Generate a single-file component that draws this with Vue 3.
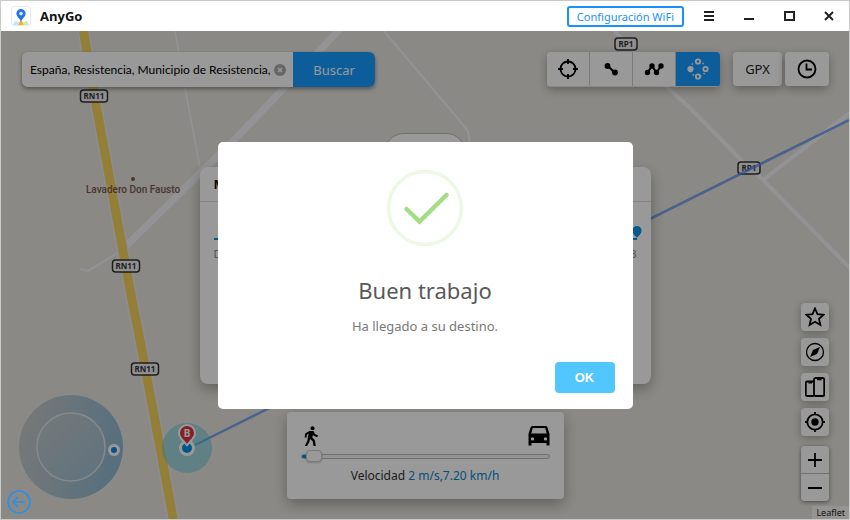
<template>
  <div class="window">
    <header class="title-bar">
      <svg class="app-icon" viewBox="0 0 20 20" aria-hidden="true">
        <rect x="0.5" y="0.5" width="19" height="19" rx="3" fill="#fff" stroke="#e9e9ee" />
        <path d="M2 19l2-4 4 1-1 3z" fill="#bfe9f5" />
        <path d="M7 19l2-4h2l2 4z" fill="#fbb02d" />
        <path d="M13 19l-1-3 4-1 2 4z" fill="#c9efad" />
        <path d="M10 3a4.6 4.6 0 0 0-4.6 4.6C5.400 11 9 12.500 10 16c1-3.500 4.600-5 4.600-8.400A4.600 4.600 0 0 0 10 3z" fill="#2475ec" />
        <circle cx="10" cy="7.600" r="1.800" fill="#cfe6ff" />
      </svg>
      <h1 class="app-name">AnyGo</h1>
      <button class="wifi-btn" type="button">Configuración WiFi</button>
      <button
        v-for="control in controls"
        :key="control.label"
        class="control-btn"
        type="button"
        :aria-label="control.label"
      >
        <svg viewBox="0 0 12 12" aria-hidden="true"><path :d="control.path" /></svg>
      </button>
    </header>

    <main class="stage">
      <svg class="map" viewBox="1 31 848 488" preserveAspectRatio="xMidYMid slice" aria-hidden="true">
        <g class="road">
          <path d="M175 31L189 110L200 167" stroke-width="1.500" />
          <path d="M384 31L400 50L459 120L468 131L470 145" stroke-width="2" />
          <path d="M127 247L88 271L80 269" stroke-width="2" />
          <path d="M341 28L263 110L240 134L124 248" stroke-width="7" />
          <path d="M612 28L667 87L692 110L742 161L763 180L851 269" stroke-width="4" />
          <path d="M763 180L851 112" stroke-width="4" />
        </g>
        <path d="M83 28L97 110L132 300L140 340L174 523" fill="none" stroke="#ebebf2" stroke-width="12" />
        <path d="M83 28L97 110L132 300L140 340L174 523" fill="none" stroke="#f6d45c" stroke-width="9" />
        <g v-for="shield in shields" :key="shield.x" class="shield">
          <rect :x="shield.x - shield.w / 2" :y="shield.y - 6" :width="shield.w" height="12" rx="3" />
          <text :x="shield.x" :y="shield.y + 3">{{ shield.name }}</text>
        </g>
        <circle cx="133" cy="179" r="2" fill="#7a5850" />
        <text class="place" x="133" y="193">Lavadero Don Fausto</text>
        <path d="M187 449L849 120" stroke="#4f8df0" stroke-opacity="0.75" stroke-width="2.500" />
        <circle cx="187" cy="448" r="25" fill="#59c5d6" fill-opacity="0.5" />
        <circle cx="187" cy="448" r="6.500" fill="#0091e6" stroke="#fff" stroke-width="3" />
        <path
          d="M187 446c-1-4-8-7-8-13a8 8 0 0 1 16 0c0 6-7 9-8 13z"
          fill="#dc3545"
          stroke="#fff"
          stroke-width="2"
        />
        <text class="pin-text" x="187" y="437">B</text>
      </svg>

      <div class="top-tools">
        <form class="search" @submit.prevent>
          <div class="search-field">
            <input v-model="query" type="text" aria-label="Buscar ubicación" />
            <button class="clear-btn" type="button" aria-label="Borrar" @click="query = ''">
              <svg viewBox="0 0 12 12" aria-hidden="true">
                <circle cx="6" cy="6" r="6" fill="#aaa" />
                <path d="M4 4l4 4M8 4l-4 4" stroke="#fff" stroke-width="1.500" />
              </svg>
            </button>
          </div>
          <button class="search-btn" type="submit">Buscar</button>
        </form>

        <div class="modes">
          <button class="mode" type="button" aria-label="Teletransporte">
            <svg viewBox="0 0 22 22" class="line-icon" aria-hidden="true">
              <circle cx="11" cy="11" r="7.500" />
              <path d="M11 1v5M11 16v5M1 11h5M16 11h5" />
            </svg>
          </button>
          <button class="mode" type="button" aria-label="Ruta de un punto">
            <svg viewBox="0 0 22 22" aria-hidden="true">
              <path d="M7 7l8 8" stroke="#000" stroke-width="2" />
              <circle cx="7.500" cy="8" r="2.900" /><circle cx="15" cy="14.500" r="2.900" />
            </svg>
          </button>
          <button class="mode" type="button" aria-label="Ruta de varios puntos">
            <svg viewBox="0 0 22 22" aria-hidden="true">
              <path d="M4.500 14.500L9 8L13.500 14.500L18 8" fill="none" stroke="#000" stroke-width="2" />
              <circle cx="4.500" cy="14.500" r="2.700" /><circle cx="9" cy="8" r="2.700" />
              <circle cx="13.500" cy="14.500" r="2.700" /><circle cx="18" cy="8" r="2.700" />
            </svg>
          </button>
          <button class="mode active" type="button" aria-label="Palanca de mando">
            <svg viewBox="0 0 22 22" aria-hidden="true">
              <circle cx="11" cy="11" r="7.500" fill="none" stroke="#fff" stroke-width="1.500" stroke-dasharray="1.500 2.500" />
              <g fill="#159bff" stroke="#fff" stroke-width="1.800">
                <circle cx="11" cy="3.500" r="2.200" /><circle cx="18.500" cy="11" r="2.200" />
                <circle cx="11" cy="18.500" r="2.200" /><circle cx="3.500" cy="11" r="2.200" fill="#fff" />
              </g>
            </svg>
          </button>
        </div>
        <button class="tool gpx" type="button">GPX</button>
        <button class="tool" type="button" aria-label="Historial">
          <svg viewBox="0 0 22 22" class="line-icon" aria-hidden="true">
            <circle cx="11" cy="11" r="8.500" />
            <path d="M10.500 5.500v6h5.500" />
          </svg>
        </button>
      </div>

      <div class="route-wrap">
        <div class="route-tab"></div>
        <section class="route-panel">
          <h2>M</h2>
          <div class="route-body">
            <div class="route-line">
              <svg viewBox="0 0 10 12" aria-hidden="true">
                <path d="M5 0a4.500 4.500 0 0 0-4.500 4.500C.500 8 3.500 9.500 5 12c1.500-2.500 4.500-4 4.500-7.500A4.500 4.500 0 0 0 5 0z" />
              </svg>
            </div>
            <div class="route-labels"><span>D</span><span>3</span></div>
          </div>
        </section>
      </div>

      <div class="speed-panel">
        <div class="speed-icons">
          <svg class="walker" viewBox="0 0 18 20" aria-hidden="true">
            <circle cx="9.500" cy="2.300" r="2" />
            <path d="M6.500 5h4l1.500 3 3 1.500-.800 1.700-3.500-1.500-.700-1.200-.700 3 2.500 2.500 1 6h-2.300l-.800-4.800-2.600-2.200-.800 3-2.300 4H1.800l2.500-5 1.300-7.300-1.600.9-.500 2.900H1.600L2.200 7.500z" />
          </svg>
          <svg class="car" viewBox="0 0 22 20" aria-hidden="true">
            <path
              fill-rule="evenodd"
              d="M4.500 0h13c1 0 1.700.600 2 1.500L21.500 8v11.500h-3V17h-15v2.500h-3V8L2.500 1.500C2.800.600 3.500 0 4.500 0zM4.800 2L3.200 7.500h15.600L17.200 2zM4.500 11.200a1.700 1.700 0 1 0 0 3.400 1.700 1.700 0 0 0 0-3.400zM17.500 11.200a1.700 1.700 0 1 0 0 3.400 1.700 1.700 0 0 0 0-3.400z"
            />
          </svg>
        </div>
        <input v-model.number="speed" class="speed-slider" type="range" min="1" max="50" aria-label="Velocidad" />
        <p class="speed-text">Velocidad <span>{{ speed }} m/s,{{ kmh }} km/h</span></p>
      </div>

      <svg class="joystick" viewBox="0 0 104 104" aria-hidden="true">
        <defs>
          <linearGradient id="pad" x1="0" y1="0.400" x2="1" y2="0.600">
            <stop offset="0" stop-color="#c6c9c9" />
            <stop offset="1" stop-color="#8eb8d2" />
          </linearGradient>
          <linearGradient id="hub" x1="0" y1="0" x2="1" y2="1">
            <stop offset="0" stop-color="#c4c9ca" />
            <stop offset="1" stop-color="#9dbfd4" />
          </linearGradient>
        </defs>
        <circle cx="52" cy="52" r="52" fill="url(#pad)" />
        <circle cx="52" cy="52" r="34" fill="url(#hub)" stroke="#dfe6ec" stroke-width="1.500" />
        <circle cx="95" cy="55" r="6" fill="#fff" />
        <circle cx="95" cy="55" r="3" fill="#1186e8" />
      </svg>

      <div class="side-tools">
        <button class="side-btn" type="button" aria-label="Favoritos">
          <svg viewBox="0 0 20 20" class="line-icon" aria-hidden="true">
            <path d="M10 1.500l2.500 5.700 6.200.6-4.700 4.100 1.400 6.100L10 14.800 4.600 18 6 11.900 1.300 7.800l6.200-.600z" />
          </svg>
        </button>
        <button class="side-btn" type="button" aria-label="Brújula">
          <svg viewBox="0 0 20 20" aria-hidden="true">
            <circle cx="10" cy="10" r="8.500" fill="none" stroke="#000" stroke-width="1.300" />
            <path d="M15 5l-3 7-7 3 3-7z" />
          </svg>
        </button>
        <button class="side-btn" type="button" aria-label="Dispositivos">
          <svg viewBox="0 0 20 20" class="line-icon" aria-hidden="true">
            <path d="M9 19H2.300a1.500 1.500 0 0 1-1.500-1.500V6A1.500 1.500 0 0 1 2.300 4.500H9" />
            <rect x="9" y="1" width="10.200" height="18" rx="1.500" />
            <path d="M3.500 5.200h3.500M12 2h4.500" stroke-width="2.500" />
          </svg>
        </button>
        <button class="side-btn" type="button" aria-label="Centrar">
          <svg viewBox="0 0 20 20" class="line-icon" aria-hidden="true">
            <circle cx="10" cy="10" r="7.700" />
            <circle cx="10" cy="10" r="2.800" fill="#000" />
            <path d="M10 0v3M10 17v3M0 10h3M17 10h3" />
          </svg>
        </button>
        <div class="zoom-group">
          <button type="button" aria-label="Acercar">
            <svg viewBox="0 0 14 14" class="line-icon" aria-hidden="true"><path d="M7 0v14M0 7h14" /></svg>
          </button>
          <button type="button" aria-label="Alejar">
            <svg viewBox="0 0 14 14" class="line-icon" aria-hidden="true"><path d="M0 7h14" /></svg>
          </button>
        </div>
      </div>
      <a class="attribution" href="#">Leaflet</a>

      <div v-if="showAlert" class="backdrop">
        <div class="alert" role="alertdialog" aria-labelledby="alert-title" aria-describedby="alert-text">
          <svg class="alert-icon" viewBox="0 0 78 78" aria-hidden="true">
            <circle cx="39" cy="39" r="36.500" fill="none" stroke="#edf8e7" stroke-width="3.500" />
            <path d="M20.500 40L33.500 52.500L60.500 26" fill="none" stroke="#a5dc86" stroke-width="4.500" stroke-linecap="round" />
          </svg>
          <h2 id="alert-title">Buen trabajo</h2>
          <p id="alert-text">Ha llegado a su destino.</p>
          <button class="ok-btn" type="button" @click="showAlert = false">OK</button>
        </div>
      </div>

      <button class="back-btn" type="button" aria-label="Volver">
        <svg viewBox="0 0 24 24" aria-hidden="true">
          <circle cx="12" cy="12" r="11" />
          <path d="M18 12H6.500M11 7l-5 5 5 5" />
        </svg>
      </button>
    </main>
  </div>
</template>

<script setup>
import { ref, computed } from 'vue'

const query = ref('España, Resistencia, Municipio de Resistencia,')
const speed = ref(2)
const showAlert = ref(true)

const kmh = computed(() => (speed.value * 3.6).toFixed(2))

const controls = [
  { label: 'Menú', path: 'M1 2h10M1 6h10M1 10h10' },
  { label: 'Minimizar', path: 'M1 9h10' },
  { label: 'Maximizar', path: 'M2 2h9v8H2z' },
  { label: 'Cerrar', path: 'M2 2l8 8M10 2l-8 8' }
]

const shields = [
  { name: 'RN11', x: 94, y: 96, w: 27 },
  { name: 'RN11', x: 126, y: 266, w: 27 },
  { name: 'RN11', x: 145, y: 369, w: 27 },
  { name: 'RP1', x: 626, y: 44, w: 22 },
  { name: 'RP1', x: 749, y: 168, w: 22 }
]
</script>

<style>
body {
  margin: 0;
}
</style>

<style scoped>
.window {
  display: flex;
  flex-direction: column;
  box-sizing: border-box;
  min-height: 100vh;
  border: 1px solid #c9c9c9;
  background: #fff;
  font-family: "Noto Sans", "Open Sans", sans-serif;
  color: #111;
}

button {
  display: flex;
  align-items: center;
  justify-content: center;
  padding: 0;
  border: 0;
  background: #fff;
  font-family: inherit;
  cursor: pointer;
}

.line-icon {
  fill: none;
  stroke: #000;
  stroke-width: 1.8;
}

.title-bar {
  display: flex;
  align-items: center;
  height: 30px;
  padding-left: 10px;
}

.app-icon {
  width: 20px;
  height: 20px;
}

.app-name {
  flex: 1;
  margin: 0 0 0 9px;
  font-family: "Open Sans", sans-serif;
  font-size: 13px;
  font-weight: 700;
}

.wifi-btn {
  height: 21px;
  margin-right: 5px;
  padding: 0 8px;
  border: 2px solid #1890ff;
  border-radius: 3px;
  color: #1890ff;
  font-size: 11px;
}

.control-btn {
  width: 40px;
  height: 28px;
}

.control-btn svg {
  width: 12px;
  height: 12px;
  fill: none;
  stroke: #222;
  stroke-width: 2;
}

.stage {
  position: relative;
  display: grid;
  flex: 1;
  overflow: hidden;
  background: #e7e5df;
}

.stage > * {
  grid-area: 1 / 1;
}

.map {
  position: absolute;
  inset: 0;
  width: 100%;
  height: 100%;
}

.road {
  fill: none;
  stroke: #f5f5fa;
}

.shield rect {
  fill: #eee;
  stroke: #333;
  stroke-width: 1.5;
}

.shield text {
  font-size: 8px;
  font-weight: 700;
  fill: #333;
  text-anchor: middle;
}

.place {
  font-family: Roboto, sans-serif;
  font-size: 10px;
  font-weight: 500;
  fill: #7a5850;
  text-anchor: middle;
}

.pin-text {
  font-size: 10px;
  font-weight: 700;
  fill: #fff;
  text-anchor: middle;
}

.top-tools {
  position: relative;
  display: flex;
  align-self: start;
  padding: 21px 20px 0 21px;
}

.search {
  display: flex;
  height: 35px;
  margin-right: auto;
  border-radius: 6px;
  overflow: hidden;
  box-shadow: 0 2px 4px rgba(0, 0, 0, 0.4);
}

.search-field {
  display: flex;
  align-items: center;
  width: 263px;
  padding-left: 8px;
  background: #fff;
}

.search-field input {
  flex: 1;
  min-width: 0;
  padding: 0;
  border: 0;
  outline: none;
  background: none;
  font-family: Lato, "Liberation Sans", sans-serif;
  font-size: 12px;
  color: #000;
}

.clear-btn {
  width: 12px;
  margin-right: 7px;
}

.search-btn {
  width: 82px;
  background: #159bff;
  color: #fff;
  font-size: 13px;
}

.modes {
  display: flex;
  margin-right: 13px;
  border-radius: 4px;
  overflow: hidden;
  box-shadow: 0 3px 10px rgba(0, 0, 0, 0.3);
}

.mode {
  width: 43px;
  height: 34px;
  border-right: 1px solid #ccc;
}

.mode svg,
.tool svg {
  width: 22px;
  height: 22px;
}

.mode.active {
  width: 44px;
  border-right: 0;
  background: #159bff;
}

.tool {
  width: 44px;
  height: 34px;
  border-radius: 4px;
  box-shadow: 0 3px 10px rgba(0, 0, 0, 0.3);
}

.tool.gpx {
  width: 49px;
  margin-right: 3px;
  font-size: 13px;
  color: #222;
}

.route-wrap {
  position: relative;
  align-self: start;
  justify-self: center;
  width: 451px;
  margin-top: 102px;
}

.route-tab {
  box-sizing: border-box;
  width: 82px;
  height: 34px;
  margin: 0 auto;
  border: 1px solid #bbb;
  border-radius: 20px 20px 0 0;
  background: #fff;
}

.route-panel {
  height: 217px;
  border-radius: 8px;
  background: #fff;
  box-shadow: 0 5px 14px rgba(0, 0, 0, 0.3);
}

.route-panel h2 {
  margin: 0;
  padding: 0 14px;
  border-bottom: 1px solid #ddd;
  font-size: 13px;
  line-height: 34px;
}

.route-body {
  padding: 24px 14px 0;
}

.route-line {
  display: flex;
  justify-content: flex-end;
  border-bottom: 2px solid #0a93e8;
}

.route-line svg {
  width: 10px;
  height: 12px;
  margin-right: -5px;
  fill: #0a93e8;
}

.route-labels {
  display: flex;
  justify-content: space-between;
  font-size: 11px;
  line-height: 28px;
  color: #888;
}

.speed-panel {
  position: relative;
  box-sizing: border-box;
  align-self: end;
  justify-self: center;
  width: 277px;
  height: 87px;
  margin-bottom: 20px;
  padding: 14px 14px 0;
  border-radius: 4px;
  background: #fff;
  box-shadow: 0 5px 14px rgba(0, 0, 0, 0.3);
}

.speed-icons {
  display: flex;
  justify-content: space-between;
}

.walker {
  width: 18px;
  height: 20px;
  margin-left: 2px;
}

.car {
  width: 22px;
  height: 20px;
}

.speed-slider {
  display: block;
  width: 100%;
  height: 14px;
  margin: 3px 0 0;
  appearance: none;
  background: none;
}

.speed-slider::-webkit-slider-runnable-track {
  box-sizing: border-box;
  height: 5px;
  border: 1px solid #bbb;
  border-radius: 3px;
  background: linear-gradient(to right, #0091e6 5px, #f5f5f5 5px);
}

.speed-slider::-webkit-slider-thumb {
  width: 16px;
  height: 12px;
  margin-top: -5px;
  appearance: none;
  border: 1px solid #ccc;
  border-radius: 4px;
  background: #fff;
  box-shadow: 0 1px 2px rgba(0, 0, 0, 0.2);
}

.speed-text {
  margin: 3px 0 0;
  font-size: 12px;
  line-height: 20px;
  text-align: center;
  color: #333;
}

.speed-text span {
  color: #0a85c8;
}

.joystick {
  position: relative;
  align-self: end;
  justify-self: start;
  width: 104px;
  height: 104px;
  margin: 0 0 20px 18px;
}

.side-tools {
  position: relative;
  display: flex;
  flex-direction: column;
  gap: 7px;
  align-self: end;
  justify-self: end;
  margin: 0 20px 18px 0;
}

.side-btn {
  width: 28px;
  height: 28px;
  border-radius: 4px;
  box-shadow: 0 2px 8px rgba(0, 0, 0, 0.3);
}

.side-btn svg {
  width: 20px;
  height: 20px;
}

.zoom-group {
  margin-top: 3px;
  border-radius: 4px;
  overflow: hidden;
  box-shadow: 0 1px 4px rgba(0, 0, 0, 0.5);
}

.zoom-group button {
  width: 28px;
  height: 27px;
}

.zoom-group button + button {
  height: 28px;
  border-top: 1px solid #bbb;
}

.zoom-group svg {
  width: 14px;
  height: 14px;
}

.attribution {
  position: relative;
  align-self: end;
  justify-self: end;
  padding: 0 4px;
  background: rgba(255, 255, 255, 0.7);
  font-size: 9px;
  line-height: 13px;
  color: #222;
  text-decoration: none;
}

.backdrop {
  position: relative;
  display: flex;
  align-items: center;
  justify-content: center;
  background: rgba(0, 0, 0, 0.4);
}

.alert {
  display: flex;
  flex-direction: column;
  align-items: center;
  box-sizing: border-box;
  width: 415px;
  padding: 27px 18px 16px;
  border-radius: 5px;
  background: #fff;
}

.alert-icon {
  width: 78px;
  height: 78px;
}

.alert h2 {
  margin: 27px 0 0;
  font-size: 22px;
  font-weight: 400;
  line-height: 32px;
  color: #595959;
}

.alert p {
  margin: 10px 0 0;
  font-size: 13px;
  line-height: 20px;
  color: #797979;
}

.ok-btn {
  align-self: flex-end;
  width: 60px;
  height: 31px;
  margin-top: 26px;
  border-radius: 4px;
  background: #52c6ff;
  color: #fff;
  font-family: "Liberation Sans", Arial, sans-serif;
  font-size: 13px;
  font-weight: 700;
}

.back-btn {
  position: relative;
  align-self: end;
  justify-self: start;
  width: 24px;
  height: 24px;
  margin: 0 0 5px 6px;
  background: none;
}

.back-btn svg {
  width: 24px;
  height: 24px;
  fill: none;
  stroke: #2492ec;
  stroke-width: 1.5;
}
</style>
